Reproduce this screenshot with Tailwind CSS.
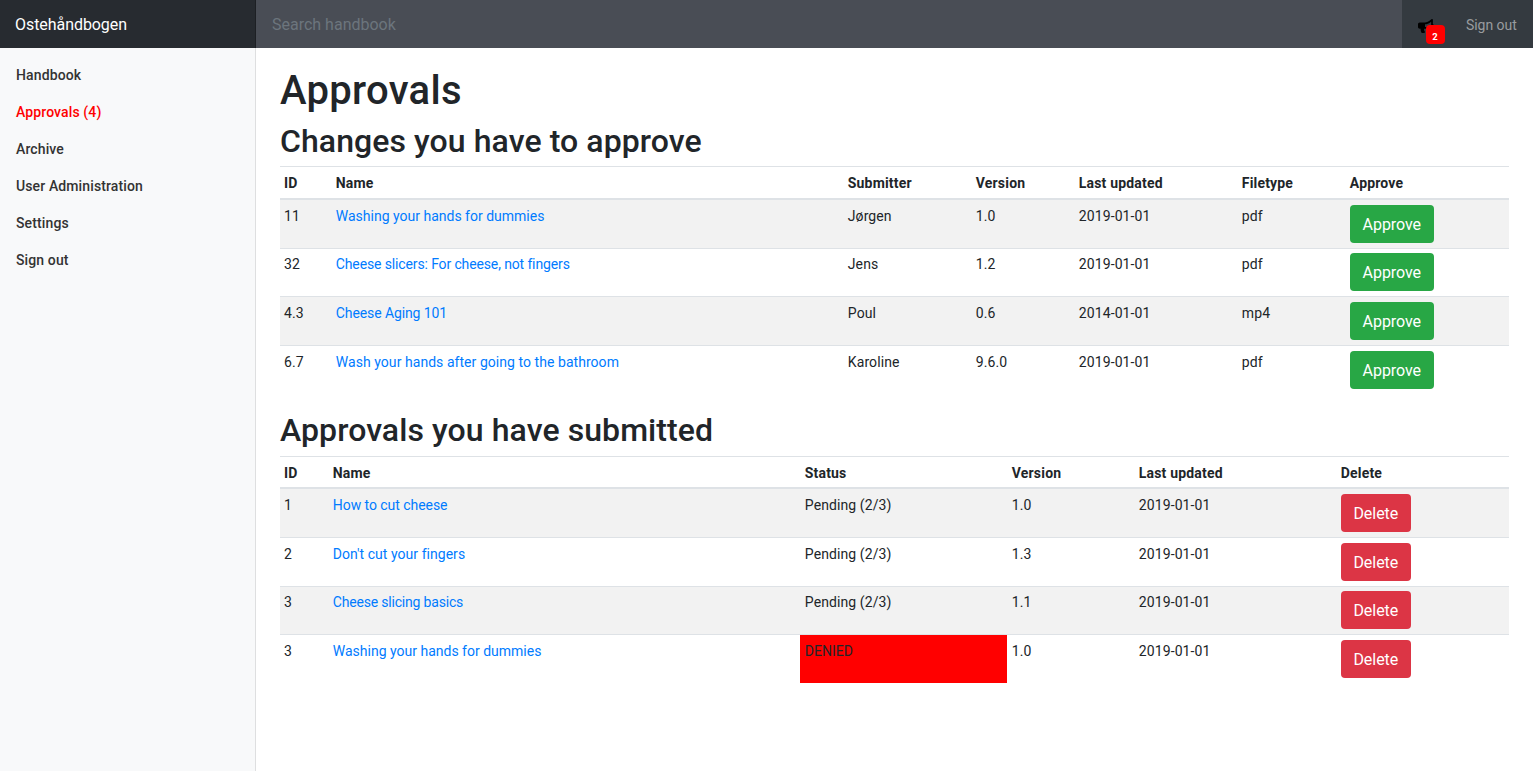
<!DOCTYPE html>
<html lang="da">
<head>
<meta charset="utf-8">
<title>Ostehåndbogen</title>
<script src="https://cdn.jsdelivr.net/npm/@tailwindcss/browser@4"></script>
</head>
<body class="h-screen overflow-hidden flex flex-col bg-white font-['Roboto',sans-serif] text-[14px] leading-[21px] text-[#212529]">
<header class="h-12 shrink-0 flex items-stretch bg-[#343a40]">
  <a class="w-64 shrink-0 pl-[15px] pt-[2px] flex items-center text-base tracking-[-0.06px] text-white bg-black/25 shadow-[inset_-1px_0_0_rgba(0,0,0,0.25)]">Ostehåndbogen</a>
  <input class="w-[1146px] shrink-0 px-4 pt-[2px] text-base text-white bg-[#494d55] placeholder:text-[#6c757d] outline-none" placeholder="Search handbook">
  <a class="relative ml-4 mt-[19px] w-4 h-4 block">
    <svg class="w-[15.75px] h-[14px]" viewBox="0 0 576 512" fill="#000"><path d="M576 240c0-23.63-12.95-44.04-32-55.12V32.01C544 23.26 537.02 0 512 0c-7.12 0-14.19 2.38-19.98 7.02l-85.03 68.03C364.28 109.19 310.66 128 256 128H64c-35.35 0-64 28.65-64 64v96c0 35.35 28.65 64 64 64h33.7c-1.39 10.48-2.18 21.14-2.18 32 0 39.77 9.26 77.35 25.56 110.94 5.19 10.69 16.52 17.06 28.4 17.06h74.28c26.05 0 41.69-29.84 25.9-50.56-16.4-21.52-26.15-48.36-26.15-77.44 0-11.11 1.62-21.79 4.41-32H256c54.66 0 108.28 18.81 150.98 52.95l85.03 68.03a32.023 32.023 0 0 0 19.98 7.02c24.92 0 32-22.78 32-32V295.13C563.05 284.04 576 263.63 576 240zm-96 141.42l-33.05-26.44C392.95 311.78 325.12 288 256 288v-96c69.12 0 136.95-23.78 190.95-66.98L480 98.58v282.84z"/></svg>
    <span class="absolute left-2 top-[6px] w-[19px] h-[19px] pt-[3px] pr-px rounded-[4px] bg-[red] text-white text-[9.5px] leading-[18px] font-bold text-center">2</span>
  </a>
  <a class="ml-8 flex items-center pt-[2px] tracking-[-0.05px] text-[#999c9f]">Sign out</a>
</header>
<div class="flex flex-1 min-h-0">
  <nav class="w-64 shrink-0 pt-[9px] bg-[#f8f9fa] shadow-[inset_-1px_0_0_rgba(0,0,0,0.1)] font-medium tracking-[0.12px] text-[#333] flex flex-col">
    <a class="px-4 py-2">Handbook</a>
    <a class="px-4 py-2 text-[red]">Approvals (4)</a>
    <a class="px-4 py-2">Archive</a>
    <a class="px-4 py-2">User Administration</a>
    <a class="px-4 py-2">Settings</a>
    <a class="px-4 py-2">Sign out</a>
  </nav>
  <main class="flex-1 px-6 pt-4">
    <h1 class="pt-[3px] text-[40px] leading-[48px] font-medium tracking-[0.3px] mb-[5px]">Approvals</h1>
    <h2 class="pt-[2px] text-[32px] leading-[38.4px] font-medium tracking-[0.08px] mb-[6px]">Changes you have to approve</h2>
    <table class="w-full table-fixed border-collapse mb-4 [&_td]:px-[4.8px] [&_th]:px-[4.8px] [&_td]:pt-[5.8px] [&_th]:pt-[5.8px] [&_td]:pb-[3.8px] [&_th]:pb-[3.8px] [&_tr>*:first-child]:pl-1 [&_th]:tracking-[0.18px] [&_th]:text-left [&_th]:border-t [&_th]:border-b-2 [&_td]:border-t [&_th]:border-[#dee2e6] [&_td]:border-[#dee2e6] [&_td]:align-top">
      <colgroup><col class="w-[51px]"><col class="w-[512px]"><col class="w-[128px]"><col class="w-[103px]"><col class="w-[163px]"><col class="w-[108px]"><col></colgroup>
      <thead><tr><th>ID</th><th>Name</th><th>Submitter</th><th>Version</th><th>Last updated</th><th>Filetype</th><th>Approve</th></tr></thead>
      <tbody id="incoming" class="[&>tr:nth-child(odd)]:bg-black/5"></tbody>
    </table>
    <h2 class="pt-[2px] text-[32px] leading-[38.4px] font-medium tracking-[0.08px] mb-[6px]">Approvals you have submitted</h2>
    <table class="w-full table-fixed border-collapse mb-4 [&_td]:px-[4.8px] [&_th]:px-[4.8px] [&_td]:pt-[5.8px] [&_th]:pt-[5.8px] [&_td]:pb-[3.8px] [&_th]:pb-[3.8px] [&_tr>*:first-child]:pl-1 [&_th]:tracking-[0.18px] [&_th]:text-left [&_th]:border-t [&_th]:border-b-2 [&_td]:border-t [&_th]:border-[#dee2e6] [&_td]:border-[#dee2e6] [&_td]:align-top">
      <colgroup><col class="w-[48px]"><col class="w-[472px]"><col class="w-[207px]"><col class="w-[127px]"><col class="w-[202px]"><col></colgroup>
      <thead><tr><th>ID</th><th>Name</th><th>Status</th><th>Version</th><th>Last updated</th><th>Delete</th></tr></thead>
      <tbody id="submitted" class="[&>tr:nth-child(odd)]:bg-black/5"></tbody>
    </table>
  </main>
</div>
<script>
const tracking = {
  'Cheese slicers: For cheese, not fingers': 'tracking-[-0.13px]',
  'Cheese slicing basics': 'tracking-[-0.19px]',
  'Cheese Aging 101': 'tracking-[-0.1px]',
  'Wash your hands after going to the bathroom': 'tracking-[0.05px]',
  'How to cut cheese': 'tracking-[-0.05px]',
  "Don't cut your fingers": 'tracking-[0.04px]'
};
const button = (label, look) => `<td><button class="block -mt-px mb-px h-[38px] pt-[2px] rounded-[4px] text-base tracking-[-0.05px] text-white ${look}">${label}</button></td>`;
const cell = (text, i) => i === 1 ? `<td class="text-[#007bff] ${tracking[text] || ''}">${text}</td>` : text === 'DENIED' ? `<td class="bg-[red] bg-clip-padding">${text}</td>` : `<td class="tracking-[0.1px]">${text}</td>`;
const fill = (id, rows, label, look) => {
  document.getElementById(id).innerHTML = rows.map(r => `<tr>${r.map(cell).join('')}${button(label, look)}</tr>`).join('');
};
fill('incoming', [
  ['11', 'Washing your hands for dummies', 'Jørgen', '1.0', '2019-01-01', 'pdf'],
  ['32', 'Cheese slicers: For cheese, not fingers', 'Jens', '1.2', '2019-01-01', 'pdf'],
  ['4.3', 'Cheese Aging 101', 'Poul', '0.6', '2014-01-01', 'mp4'],
  ['6.7', 'Wash your hands after going to the bathroom', 'Karoline', '9.6.0', '2019-01-01', 'pdf']
], 'Approve', 'w-[84px] bg-[#28a745]');
fill('submitted', [
  ['1', 'How to cut cheese', 'Pending (2/3)', '1.0', '2019-01-01'],
  ['2', "Don't cut your fingers", 'Pending (2/3)', '1.3', '2019-01-01'],
  ['3', 'Cheese slicing basics', 'Pending (2/3)', '1.1', '2019-01-01'],
  ['3', 'Washing your hands for dummies', 'DENIED', '1.0', '2019-01-01']
], 'Delete', 'w-[70px] bg-[#dc3545]');
</script>
</body>
</html>
